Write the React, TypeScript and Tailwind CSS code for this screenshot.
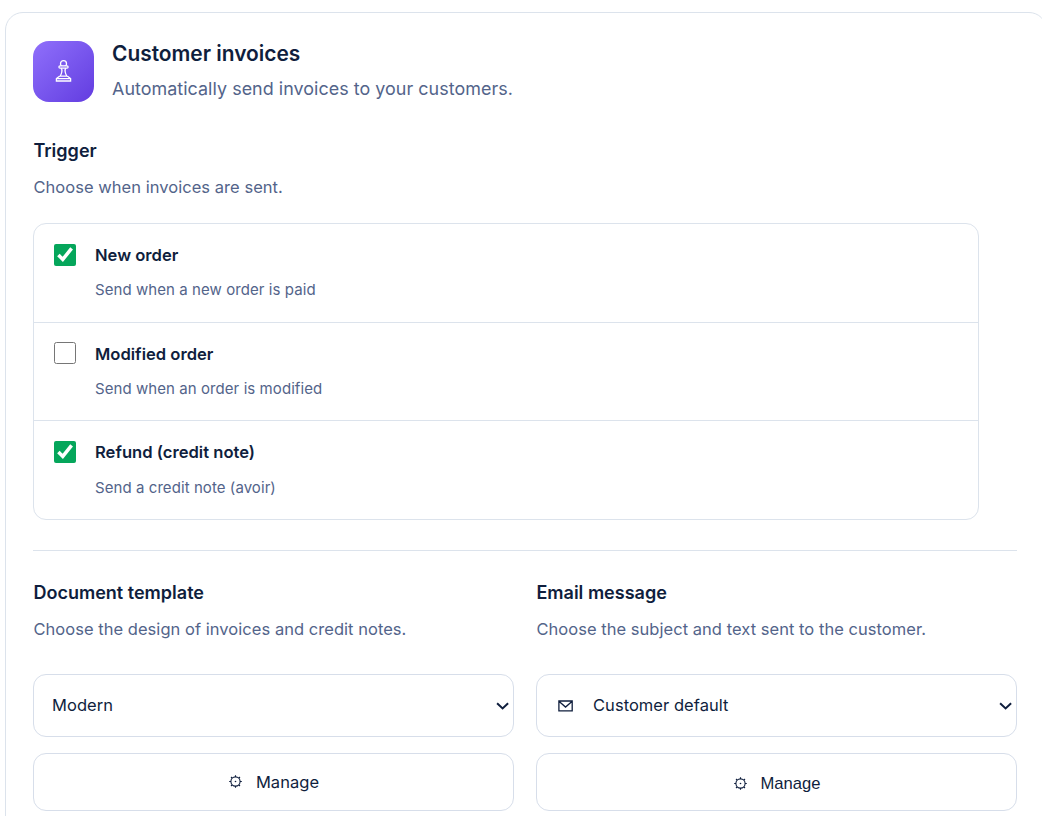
import type { ReactNode } from "react";

const triggers = [
  { title: "New order", text: "Send when a new order is paid", checked: true },
  { title: "Modified order", text: "Send when an order is modified", checked: false },
  { title: "Refund (credit note)", text: "Send a credit note (avoir)", checked: true },
];

export default function App() {
  return (
    <div className="h-[816px] overflow-hidden bg-white pl-[5px] pt-3 font-['Inter',sans-serif] text-[#0f1e3d]">
      <section className="h-[900px] w-[1042px] rounded-[18px] border border-[#dce3ec] px-[27px] pt-7">
        {/* Header */}
        <header className="flex h-[61px] gap-[18px]">
          <div className="flex size-[61px] items-center justify-center rounded-2xl bg-linear-to-br from-[#906ffb] to-[#633be0]">
            <PawnIcon />
          </div>
          <div className="whitespace-nowrap">
            <h1 className="text-[20.9px] leading-[26px] font-semibold">Customer invoices</h1>
            <p className="mt-[9px] text-[17.9px] leading-[26px] tracking-[0.045px] text-[#53648a]">
              Automatically send invoices to your customers.
            </p>
          </div>
        </header>

        {/* Trigger */}
        <SectionTitle title="Trigger" text="Choose when invoices are sent." className="mt-9" />
        <div className="mt-[23px] h-[297px] w-[946px] divide-y divide-[#dce3ec] rounded-[13px] border border-[#dce3ec]">
          {triggers.map((item) => (
            <TriggerRow key={item.title} {...item} />
          ))}
        </div>

        <hr className="mt-[30px] w-[984px] border-[#dce3ec]" />

        {/* Template and message */}
        <div className="mt-[29px] grid w-[984px] grid-cols-2 gap-[22px]">
          <div>
            <SectionTitle title="Document template" text="Choose the design of invoices and credit notes." />
            <SelectBox>Modern</SelectBox>
            <button className="mt-4 flex h-[58px] w-full items-center justify-center rounded-[13px] border border-[#d7deea] pl-px text-[16.5px] tracking-[0.04px]">
              <GearIcon />
              <span className="ml-[13px]">Manage</span>
            </button>
          </div>
          <div>
            <SectionTitle title="Email message" text="Choose the subject and text sent to the customer." />
            <SelectBox>
              <MailIcon />
              <span className="ml-[19px]">Customer default</span>
            </SelectBox>
            <button className="mt-4 flex h-[58px] w-full items-center justify-center rounded-[13px] border border-[#d7deea] pt-[3px] pl-px font-['Liberation_Sans',sans-serif] text-[16.6px]">
              <GearIcon />
              <span className="ml-[13px] pt-px">Manage</span>
            </button>
          </div>
        </div>
      </section>
    </div>
  );
}

const SectionTitle = ({ title, text, className = "" }: { title: string; text: string; className?: string }) => (
  <div className={`pl-[0.4px] whitespace-nowrap ${className}`}>
    <h2 className="text-[18.05px] leading-[26px] font-semibold">{title}</h2>
    <p className="mt-[11px] text-[16.5px] leading-[25px] tracking-[0.04px] text-[#53648a]">{text}</p>
  </div>
);

const TriggerRow = ({ title, text, checked }: { title: string; text: string; checked: boolean }) => (
  <label className="flex h-[98.6px] pt-5 pl-5">
    <input type="checkbox" defaultChecked={checked} className="-mt-[0.2px] size-[22px] shrink-0 accent-[#05a65b]" />
    <span className="ml-[19px] block">
      <span className="block text-[16.6px] leading-[22px] font-semibold">{title}</span>
      <span className="mt-[13.4px] block text-[15px] leading-[22px] tracking-[0.07px] text-[#53648a]">{text}</span>
    </span>
  </label>
);

const SelectBox = ({ children }: { children: ReactNode }) => (
  <div className="mt-8 flex h-[63px] items-center rounded-[13px] border border-[#d7deea] pr-[3.5px] pl-[18px] text-[16.5px] tracking-[0.04px]">
    {children}
    <svg className="ml-auto" width="14" height="10" viewBox="0 0 14 10" fill="none" stroke="currentColor" strokeWidth="2">
      <path d="M1.1 2.2 6.6 7.4l5.5-5.2" />
    </svg>
  </div>
);

const PawnIcon = () => (
  <svg width="17" height="24" viewBox="0 0 17 24" fill="none" stroke="#fff" strokeWidth="1.3">
    <circle cx="8.5" cy="3.7" r="3" />
    <rect x="3.9" y="5.8" width="9.2" height="2.3" rx="1.15" fill="#8060ed" />
    <path d="M6.3 8.1c.8 1.3.8 2.5.5 3.9-.3 1.7-.8 3-1.7 4.2h6.8c-.9-1.2-1.4-2.5-1.7-4.2-.3-1.4-.3-2.6.5-3.9M4.5 16.2l-3.1 2.4V21h14.2v-2.4l-3.1-2.4M1.4 18.6h14.2" />
  </svg>
);

const GearIcon = () => (
  <svg width="14" height="14" viewBox="0 0 14 14" fill="none" stroke="currentColor" strokeWidth="1.1">
    <circle cx="6.5" cy="6.5" r="4.6" />
    <circle cx="6.5" cy="6.5" r=".8" fill="currentColor" stroke="none" />
    <path d="M6.5.2v1.8M6.5 11v1.8M.2 6.5H2M11 6.5h1.8M2 2l1.2 1.2M9.8 9.8 11 11M2 11l1.2-1.2M9.8 3.2 11 2" />
  </svg>
);

const MailIcon = () => (
  <svg className="ml-[3px]" width="16" height="12" viewBox="0 0 16 12" fill="none" stroke="currentColor" strokeWidth="1.3">
    <path d="M.9 1h13.3v9.8H.9zM.9 1.3l6.65 5.8L14.2 1.3" />
  </svg>
);
